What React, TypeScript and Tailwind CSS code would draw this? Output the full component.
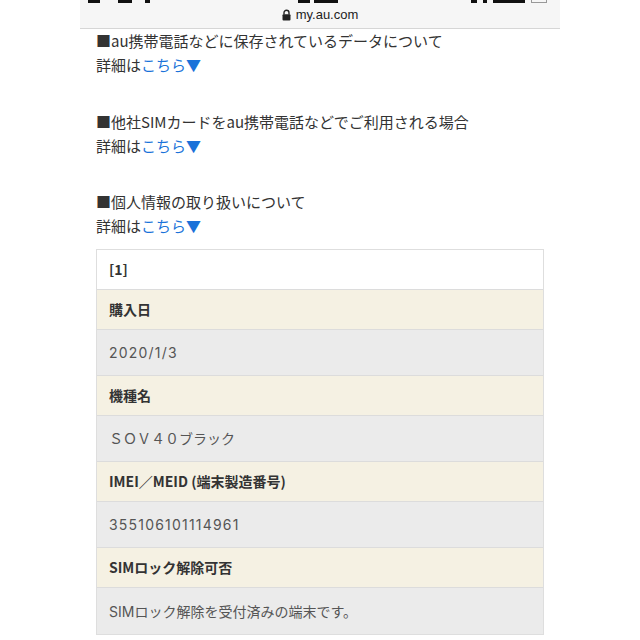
import React from "react";

const font = { fontFamily: '"Noto Sans CJK JP", "Noto Sans", sans-serif' };
const valueFont = { fontFamily: 'Inter, "Noto Sans CJK JP", sans-serif' };

function Section({ title, className }: { title: string; className?: string }) {
  return (
    <div className={className}>
      <div className="text-[15px] leading-[24px] text-[#333] whitespace-nowrap">{title}</div>
      <div className="text-[15px] leading-[24px] text-[#333] whitespace-nowrap">
        詳細は<span className="text-[#1a73d9]">こちら▼</span>
      </div>
    </div>
  );
}

function HeaderRow({ children }: { children: React.ReactNode }) {
  return (
    <div className="h-[40px] flex items-center px-3 bg-[#f5f1e3] border-b border-[#dcdcdc] text-[14px] font-bold text-[#333] whitespace-nowrap">
      {children}
    </div>
  );
}

function ValueRow({ children, last, numeric }: { children: React.ReactNode; last?: boolean; numeric?: boolean }) {
  return (
    <div
      className={
        "h-[46px] flex items-center px-3 bg-[#ebebeb] text-[14px] text-[#555] whitespace-nowrap " +
        (last ? "" : "border-b border-[#dcdcdc] ") +
        (numeric ? "tracking-[1.2px]" : "")
      }
      style={valueFont}
    >
      {children}
    </div>
  );
}

function Blob({ w }: { w: string }) {
  return <div className={"h-[3px] bg-[#111] " + w} />;
}

export default function App() {
  return (
    <div className="w-[640px] h-[640px] bg-white overflow-hidden" style={font}>
      <div className="w-[480px] mx-auto">
        {/* top browser bar */}
        <div className="h-[29px] bg-[#f6f6f6] border-b border-[#d6d6d6] flex flex-col">
          <div className="h-[3px] overflow-hidden flex items-start pl-[8px] pr-[13px]">
            <div className="flex gap-[18px]">
              <Blob w="w-[12px]" />
              <Blob w="w-[14px]" />
            </div>
            <div className="ml-[13px]">
              <Blob w="w-[5px]" />
            </div>
            <div className="ml-[148px] flex gap-[4px]">
              <Blob w="w-[12px]" />
              <Blob w="w-[24px]" />
            </div>
            <div className="ml-auto flex gap-[6px]">
              <Blob w="w-[6px]" />
              <Blob w="w-[4px]" />
              <Blob w="w-[32px]" />
              <div className="w-[16px] h-[3px] border-b border-x border-[#999]" />
            </div>
          </div>
          <div className="flex-1 flex items-center justify-center gap-[5px] pb-[1px]">
            <svg width="9" height="12" viewBox="0 0 9 12">
              <path d="M2 5.5V3.8a2.5 2.5 0 0 1 5 0V5.5" fill="none" stroke="#222" strokeWidth="1.4" />
              <rect x="0.5" y="5.3" width="8" height="6.2" rx="1" fill="#222" />
            </svg>
            <span className="text-[13px] leading-[16px] text-[#222]" style={{ fontFamily: '"Liberation Sans", Arial, sans-serif' }}>
              my.au.com
            </span>
          </div>
        </div>

        <div className="px-4">
          <Section title="■au携帯電話などに保存されているデータについて" />
          <Section className="mt-[33px]" title="■他社SIMカードをau携帯電話などでご利用される場合" />
          <Section className="mt-[32px]" title="■個人情報の取り扱いについて" />

          <div className="mt-[11px] border border-[#dedede]">
            <div className="h-[40px] flex items-center px-3 bg-white border-b border-[#dcdcdc] text-[14px] font-bold text-[#333]">
              [1]
            </div>
            <HeaderRow>購入日</HeaderRow>
            <ValueRow numeric>2020/1/3</ValueRow>
            <HeaderRow>機種名</HeaderRow>
            <ValueRow>ＳＯＶ４０ブラック</ValueRow>
            <HeaderRow>IMEI／MEID (端末製造番号)</HeaderRow>
            <ValueRow numeric>355106101114961</ValueRow>
            <HeaderRow>SIMロック解除可否</HeaderRow>
            <ValueRow last>SIMロック解除を受付済みの端末です。</ValueRow>
          </div>
        </div>
      </div>
    </div>
  );
}
